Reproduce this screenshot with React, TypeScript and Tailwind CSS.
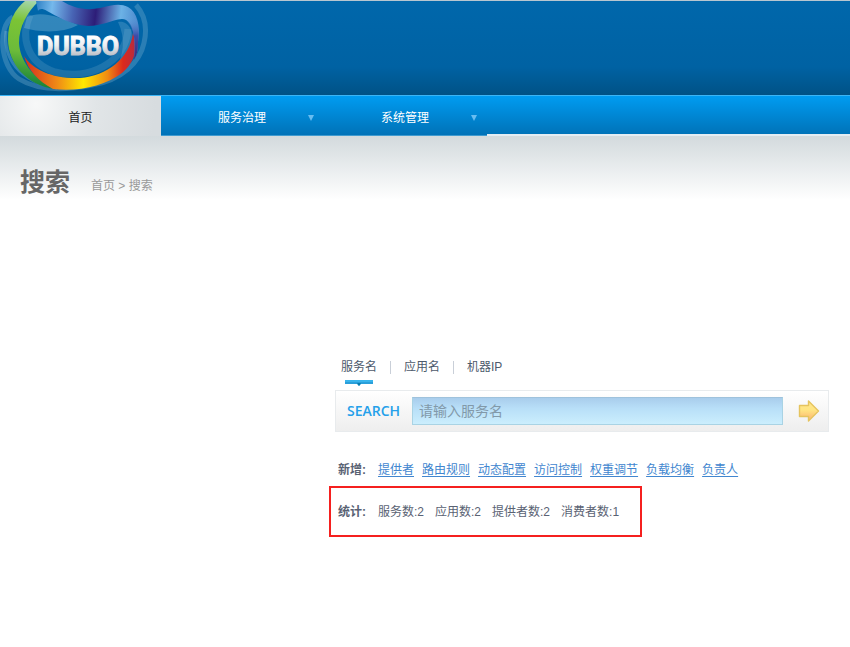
import React, { useState } from "react";

const tabs = ["服务名", "应用名", "机器IP"];
const links = ["提供者", "路由规则", "动态配置", "访问控制", "权重调节", "负载均衡", "负责人"];
const stats = ["服务数:2", "应用数:2", "提供者数:2", "消费者数:1"];

function Logo() {
  return (
    <svg width="150" height="94" viewBox="0 0 150 94" role="img" aria-label="DUBBO" className="block">
      <defs>
        <linearGradient id="green" x1="0.6" y1="0" x2="0.5" y2="1">
          <stop offset="0" stopColor="#a5d6b0" />
          <stop offset="0.25" stopColor="#7cc435" />
          <stop offset="0.6" stopColor="#6cbb3a" />
          <stop offset="1" stopColor="#0d7c3a" />
        </linearGradient>
        <linearGradient id="warm" x1="24" y1="0" x2="134" y2="0" gradientUnits="userSpaceOnUse">
          <stop offset="0" stopColor="#d62d1d" />
          <stop offset="0.3" stopColor="#ef8a16" />
          <stop offset="0.54" stopColor="#ffe900" />
          <stop offset="0.76" stopColor="#ef8b12" />
          <stop offset="0.9" stopColor="#dc2a1c" />
          <stop offset="1" stopColor="#b92b3c" />
        </linearGradient>
        <linearGradient id="cool" x1="36" y1="0" x2="140" y2="12" gradientUnits="userSpaceOnUse">
          <stop offset="0" stopColor="#2e80c4" />
          <stop offset="0.16" stopColor="#75b9ec" />
          <stop offset="0.36" stopColor="#4865b5" />
          <stop offset="0.58" stopColor="#2d1d78" />
          <stop offset="0.82" stopColor="#6cb2e6" />
          <stop offset="1" stopColor="#4a86cb" />
        </linearGradient>
        <linearGradient id="side" x1="0" y1="14" x2="0" y2="60" gradientUnits="userSpaceOnUse">
          <stop offset="0" stopColor="#68b2e8" stopOpacity="0" />
          <stop offset="0.45" stopColor="#3d4da8" />
          <stop offset="1" stopColor="#3e2472" />
        </linearGradient>
        <linearGradient id="letters" x1="0" y1="36" x2="0" y2="55" gradientUnits="userSpaceOnUse">
          <stop offset="0" stopColor="#ffffff" />
          <stop offset="0.45" stopColor="#eceef1" />
          <stop offset="1" stopColor="#b9bec6" />
        </linearGradient>
      </defs>
      <g fill="none" stroke="#8bbcd8">
        <path d="M13 16C-3 25 0 66 19 78C40 91 68 89 92 84C122 79 140 61 144 42C148 25 144 13 136 4" strokeWidth="5" opacity="0.3" />
        <path d="M30 14C20 36 27 62 55 71C88 80 126 62 128 28" strokeWidth="7" opacity="0.2" />
        <path d="M6 30C3 57 18 80 57 87" strokeWidth="3" opacity="0.35" />
      </g>
      <path d="M27 16C42 9 62 17 78 24C62 33 38 31 24 27Z" fill="#8fc5df" opacity="0.35" />
      <path d="M118 21C128 19 134 30 133 42C131 56 124 66 114 72C124 54 126 38 118 21Z" fill="#8fc5df" opacity="0.25" />
      <path d="M25 0L39 0C27 11 19 26 19 42C20 59 31 75 54 88C27 84 8 63 8 38C8 21 15 8 25 0Z" fill="url(#green)" />
      <path d="M24 55C33 69 53 78 80 77C107 75 130 57 133 32C138 47 136 60 122 72C105 85 78 91 53 88C38 80 28 69 24 55Z" fill="url(#warm)" />
      <path d="M36 0L62 0C73 7 86 10 100 7C112 4 120 2 128 6C137 11 141 25 138 41C138 49 137 54 134 59C136 43 135 18 122 18C111 19 102 25 88 25C70 24 55 14 47 10C42 7 39 8 38 10Z" fill="url(#cool)" />
      <path d="M124 4C135 8 141 25 138 41C138 49 137 54 134 59C136 43 135 24 124 18Z" fill="url(#side)" />
      <text x="37" y="54" fill="url(#letters)" stroke="url(#letters)" strokeWidth="1" className="font-[Roboto,sans-serif] text-[25px] font-bold">
        DUBBO
      </text>
    </svg>
  );
}

function Header() {
  return (
    <header className="h-[95px] border-t border-[#b8c6d0] bg-linear-to-b from-[#0067ab] via-[#0062a3] via-70% to-[#005286]">
      <Logo />
    </header>
  );
}

function MenuItem({ label }: { label: string }) {
  return (
    <button type="button" className="flex h-10 w-[163px] items-center border-b border-[#3f9bd0] pt-1 pr-2.5 pl-[57px] text-white">
      <span className="flex-1 text-left">{label}</span>
      <svg width="6" height="6" viewBox="0 0 6 6" aria-hidden="true">
        <path d="M0 0H6L3 6Z" fill="#68bdf1" />
      </svg>
    </button>
  );
}

function Nav() {
  return (
    <nav className="flex h-[41px] border-t border-[#3cb5f5] bg-linear-to-b from-[#009cf1] to-[#0071b6]">
      <a href="#home" className="flex h-10 w-[161px] items-center justify-center bg-[#d7dcdf] bg-[radial-gradient(circle_at_36px_8px,#f7f8f8,#e1e5e7_60px,#d7dcdf_120px)] pt-1 text-[#222]">
        首页
      </a>
      <MenuItem label="服务治理" />
      <MenuItem label="系统管理" />
      <div className="h-10 flex-1 border-b-2 border-[#e4edf3]" />
    </nav>
  );
}

function SearchPanel() {
  const [active, setActive] = useState(0);
  return (
    <section className="mr-[21px] ml-[335px]">
      <div className="flex h-[33px] px-1.5">
        {tabs.map((tab, i) => (
          <React.Fragment key={tab}>
            {i > 0 && <span className="mx-[13px] mt-1 h-[13px] w-px bg-[#c9cfd8]" />}
            <button type="button" onClick={() => setActive(i)} className="flex flex-col items-center text-[#4d5a6c]">
              <span className="h-5 leading-5">{tab}</span>
              {active === i && (
                <svg width="28" height="7" viewBox="0 0 28 7" className="mt-0.5" aria-hidden="true">
                  <path d="M0 1H28V5H16L14 7L12 5H0Z" fill="#2a9fda" />
                  <path d="M0 1H28V3H0Z" fill="#38b4ec" />
                  <path d="M12 4H16L14 7Z" fill="#087bae" />
                </svg>
              )}
            </button>
          </React.Fragment>
        ))}
      </div>
      <form onSubmit={(e) => e.preventDefault()} className="flex h-[42px] items-center border border-[#e8ebed] bg-linear-to-b from-white to-[#eeeeee]">
        <label htmlFor="query" className="w-[76px] pl-[11px] font-['Open_Sans',sans-serif] text-sm font-semibold text-[#25a0ea]">
          SEARCH
        </label>
        <input
          id="query"
          type="text"
          placeholder="请输入服务名"
          className="h-7 min-w-0 flex-1 border border-[#a9d3e4] border-t-[#9fc2dc] bg-linear-to-b from-[#a9cdec] via-[#b8dff8] via-40% to-[#cbeefd] px-1.5 text-sm text-[#4d5a6c] outline-none placeholder:text-[#8299a9]"
        />
        <button type="submit" aria-label="搜索" className="flex w-[45px] justify-center pl-1.5">
          <svg width="22" height="22" viewBox="0 0 22 22" aria-hidden="true">
            <defs>
              <linearGradient id="arrow" x1="0" y1="0" x2="0" y2="1">
                <stop offset="0" stopColor="#ffe78e" />
                <stop offset="0.45" stopColor="#ffe582" />
                <stop offset="1" stopColor="#fcb171" />
              </linearGradient>
            </defs>
            <path d="M1.5 5.5H10.5V1L20.5 11L10.5 21V16.5H1.5Z" fill="url(#arrow)" stroke="#e5c45f" strokeWidth="1.4" strokeLinejoin="round" />
          </svg>
        </button>
      </form>
    </section>
  );
}

export default function App() {
  return (
    <div className="min-h-screen bg-white font-['Liberation_Sans','Noto_Sans_CJK_SC',sans-serif] text-xs">
      <Header />
      <Nav />
      <main className="bg-linear-to-b from-[#d3dadd] to-white to-[64px]">
        <div className="flex h-[221px] items-start gap-[21px] pt-7 pl-5">
          <h1 className="text-[25px] leading-9 font-bold text-[#666]">搜索</h1>
          <nav aria-label="位置" className="pt-3 leading-5 text-[#999]">
            <a href="#home">首页</a> &gt; <span>搜索</span>
          </nav>
        </div>
        <SearchPanel />
        <div className="ml-[329px] text-[#596273]">
          <div className="flex pt-7 pl-[9px] leading-5">
            <strong className="w-10">新增:</strong>
            <div className="flex flex-wrap gap-x-2">
              {links.map((link) => (
                <a key={link} href="#add" className="text-[#4186cf] underline underline-offset-2">
                  {link}
                </a>
              ))}
            </div>
          </div>
          <div className="mt-1.5 flex h-[51px] w-[313px] items-center border-2 border-[#f5201f] pl-[7px]">
            <strong className="w-10">统计:</strong>
            <div className="flex gap-[11px]">
              {stats.map((stat) => (
                <span key={stat}>{stat}</span>
              ))}
            </div>
          </div>
        </div>
      </main>
    </div>
  );
}
